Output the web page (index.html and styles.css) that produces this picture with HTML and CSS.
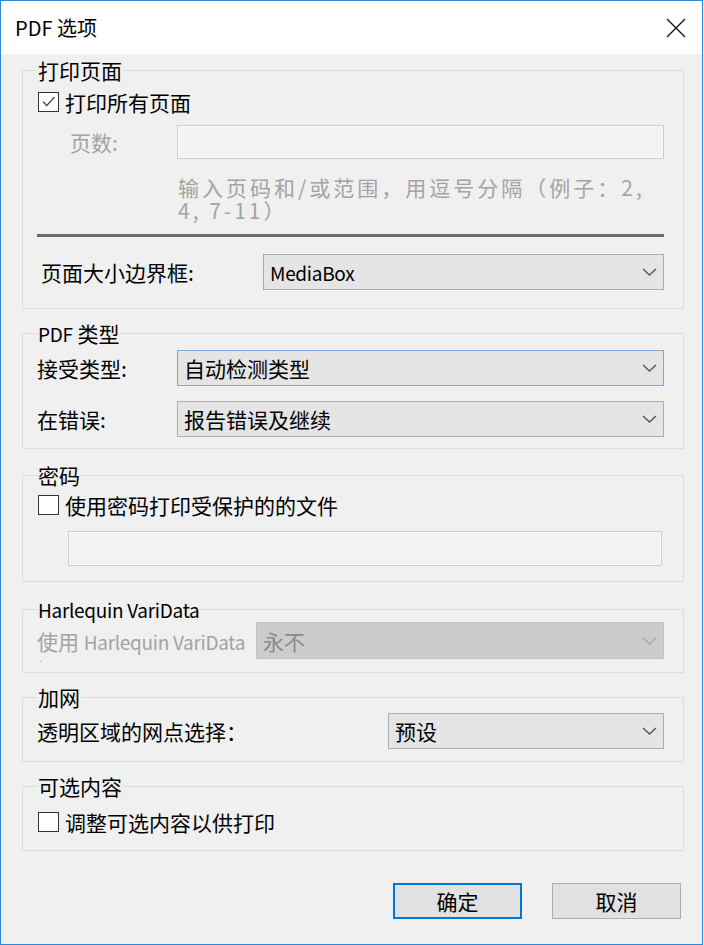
FILE: index.html
```html
<!DOCTYPE html>
<html lang="zh-CN">
<head>
<meta charset="utf-8">
<title>PDF 选项</title>
<link rel="stylesheet" href="styles.css">
</head>
<body>
<div class="window">
  <div class="titlebar">
    <span class="title">PDF 选项</span>
    <svg class="close" viewBox="0 0 20 20" width="20" height="20"><path d="M1 1 L19 19 M19 1 L1 19" stroke="#111" stroke-width="1.3" fill="none"/></svg>
  </div>
  <div class="content">
    <fieldset class="group g1">
      <legend>打印页面</legend>
      <div class="check-row g1-check">
        <span class="cb"><svg viewBox="0 0 20 20" width="18" height="18"><path d="M3.5 9.5 L7.5 14 L16 4.5" stroke="#333" stroke-width="1.4" fill="none"/></svg></span>
        <span>打印所有页面</span>
      </div>
      <div class="row pages-row">
        <span class="lbl dim lbl-pages">页数:</span>
        <div class="textbox"></div>
      </div>
      <p class="hint">输入页码和/或范围，用逗号分隔（例子：2, 4, 7-11）</p>
      <div class="sep"></div>
      <div class="row size-row">
        <span class="lbl lbl-size">页面大小边界框:</span>
        <div class="select"><span class="latin">MediaBox</span><svg class="chev" viewBox="0 0 15 8" width="15" height="8"><path d="M1 1 L7.5 7 L14 1" stroke="#555" stroke-width="1.4" fill="none"/></svg></div>
      </div>
    </fieldset>

    <fieldset class="group g2">
      <legend><span class="latin">PDF</span> 类型</legend>
      <div class="row type-row">
        <span class="lbl lbl-type">接受类型:</span>
        <div class="select focus"><span>自动检测类型</span><svg class="chev" viewBox="0 0 15 8" width="15" height="8"><path d="M1 1 L7.5 7 L14 1" stroke="#555" stroke-width="1.4" fill="none"/></svg></div>
      </div>
      <div class="row err-row">
        <span class="lbl lbl-type">在错误:</span>
        <div class="select"><span>报告错误及继续</span><svg class="chev" viewBox="0 0 15 8" width="15" height="8"><path d="M1 1 L7.5 7 L14 1" stroke="#555" stroke-width="1.4" fill="none"/></svg></div>
      </div>
    </fieldset>

    <fieldset class="group g3">
      <legend>密码</legend>
      <div class="check-row g3-check">
        <span class="cb"></span>
        <span>使用密码打印受保护的的文件</span>
      </div>
      <div class="textbox pw-box"></div>
    </fieldset>

    <fieldset class="group g4">
      <legend><span class="latin">Harlequin VariData</span></legend>
      <div class="row vd-row">
        <div class="lbl dim lbl-vd">
          <div class="vd-line">使用 <span class="latin">Harlequin VariData</span></div>
          <div class="vd-dot">.</div>
        </div>
        <div class="select disabled"><span>永不</span><svg class="chev" viewBox="0 0 15 8" width="15" height="8"><path d="M1 1 L7.5 7 L14 1" stroke="#a8a8a8" stroke-width="1.4" fill="none"/></svg></div>
      </div>
    </fieldset>

    <fieldset class="group g5">
      <legend>加网</legend>
      <div class="row screen-row">
        <span class="lbl lbl-screen">透明区域的网点选择：</span>
        <div class="select"><span>预设</span><svg class="chev" viewBox="0 0 15 8" width="15" height="8"><path d="M1 1 L7.5 7 L14 1" stroke="#555" stroke-width="1.4" fill="none"/></svg></div>
      </div>
    </fieldset>

    <fieldset class="group g6">
      <legend>可选内容</legend>
      <div class="check-row g6-check">
        <span class="cb"></span>
        <span>调整可选内容以供打印</span>
      </div>
    </fieldset>

    <div class="buttons">
      <button class="btn default">确定</button>
      <button class="btn">取消</button>
    </div>
  </div>
</div>
</body>
</html>
```

FILE: styles.css
```css
html, body {
  margin: 0;
  padding: 0;
  background: #ffffff;
}

body {
  font-family: "Noto Sans CJK SC", "Noto Sans", sans-serif;
  font-size: 21px;
  color: #000;
}

.latin {
  font-size: 19px;
  line-height: 1;
  letter-spacing: -0.3px;
}

.window {
  width: 703px;
  height: 945px;
  box-sizing: border-box;
  border: 1px solid #2b8ae0;
  background: #f0f0f0;
  display: flex;
  flex-direction: column;
}

.titlebar {
  flex: none;
  height: 53px;
  background: #ffffff;
  display: flex;
  align-items: center;
  justify-content: space-between;
  padding: 0 16px 0 14px;
}

.title {
  font-size: 20px;
  line-height: 24px;
}

.close {
  display: block;
}

.content {
  padding: 4px 18px 0 21px;
}

fieldset.group {
  margin: 0;
  padding: 0 19px 0 14px;
  border: 1px solid #dcdcdc;
  min-width: 0;
}

legend {
  padding: 0 1px;
  margin: 0;
  font-size: 21px;
  line-height: 24px;
  height: 24px;
}

.row {
  display: flex;
  align-items: center;
}

.lbl {
  flex: none;
  line-height: 24px;
}

.dim {
  color: #a3a3a3;
}

.check-row {
  display: flex;
  align-items: center;
  height: 24px;
  line-height: 24px;
}

.cb {
  flex: none;
  width: 21px;
  height: 20px;
  box-sizing: border-box;
  border: 1px solid #333;
  background: #fff;
  margin: 0 6px 0 1px;
  display: flex;
  align-items: center;
  justify-content: center;
}

.cb svg {
  display: block;
}

.textbox {
  box-sizing: border-box;
  border: 1px solid #cfcfcf;
  background: #f3f3f3;
  box-shadow: inset 0 0 0 1px #fafafa;
}

.select {
  flex: 1;
  height: 36px;
  box-sizing: border-box;
  border: 1px solid #adadad;
  background: #e5e5e5;
  display: flex;
  align-items: center;
  justify-content: space-between;
  padding: 0 6px 0 6px;
  line-height: 24px;
}

.select.focus {
  border-color: #7ea8d8;
}

.select.disabled {
  background: #cccccc;
  border-color: #c2c2c2;
  color: #8a8a8a;
  height: 37px;
}

.chev {
  display: block;
}

/* group 1 */
.g1-check {
  margin-top: 8px;
}

.pages-row {
  margin-top: 11px;
  height: 34px;
}

.lbl-pages {
  width: 140px;
  box-sizing: border-box;
  padding-left: 33px;
}

.pages-row .textbox {
  flex: 1;
  height: 34px;
}

.hint {
  margin: 17px 0 0 141px;
  color: #a3a3a3;
  line-height: 23px;
  letter-spacing: 3px;
}

.sep {
  margin-top: 12px;
  height: 3px;
  background: #6a6a6a;
}

.size-row {
  margin-top: 17px;
  margin-bottom: 18px;
}

.lbl-size {
  width: 226px;
  padding-left: 4px;
  box-sizing: border-box;
}

/* group 2 */
.g2 {
  margin-top: 12px !important;
}

.type-row {
  margin-top: 5px;
}

.err-row {
  margin-top: 15px;
  margin-bottom: 11px;
}

.lbl-type {
  width: 140px;
}

/* group 3 */
.g3 {
  margin-top: 14px !important;
}

.g3-check {
  margin-top: 6px;
}

.pw-box {
  margin: 14px 2px 15px 31px;
  height: 35px;
}

/* group 4 */
.g4 {
  margin-top: 15px !important;
}

.vd-row {
  align-items: flex-start;
  margin-top: 1px;
  margin-bottom: 9px;
}

.lbl-vd {
  width: 219px;
  box-sizing: border-box;
  padding-top: 8px;
  white-space: nowrap;
}

.vd-line {
  line-height: 23px;
}

.vd-dot {
  font-size: 10px;
  line-height: 10px;
  height: 10px;
  padding-left: 2px;
}

/* group 5 */
.g5 {
  margin-top: 12px !important;
}

.screen-row {
  margin-top: 4px;
  margin-bottom: 12px;
}

.lbl-screen {
  width: 351px;
}

/* group 6 */
.g6 {
  margin-top: 12px !important;
}

.g6-check {
  margin-top: 12px;
  margin-bottom: 16px;
}

/* buttons */
.buttons {
  display: flex;
  justify-content: flex-end;
  gap: 30px;
  margin-top: 32px;
  padding-right: 3px;
}

.btn {
  width: 129px;
  height: 36px;
  box-sizing: border-box;
  background: #e1e1e1;
  border: 1px solid #adadad;
  font-family: "Noto Sans CJK SC", "Noto Sans", sans-serif;
  font-size: 21px;
  color: #000;
  padding: 0;
  line-height: 24px;
}

.btn.default {
  border: 2px solid #0078d7;
}
```
